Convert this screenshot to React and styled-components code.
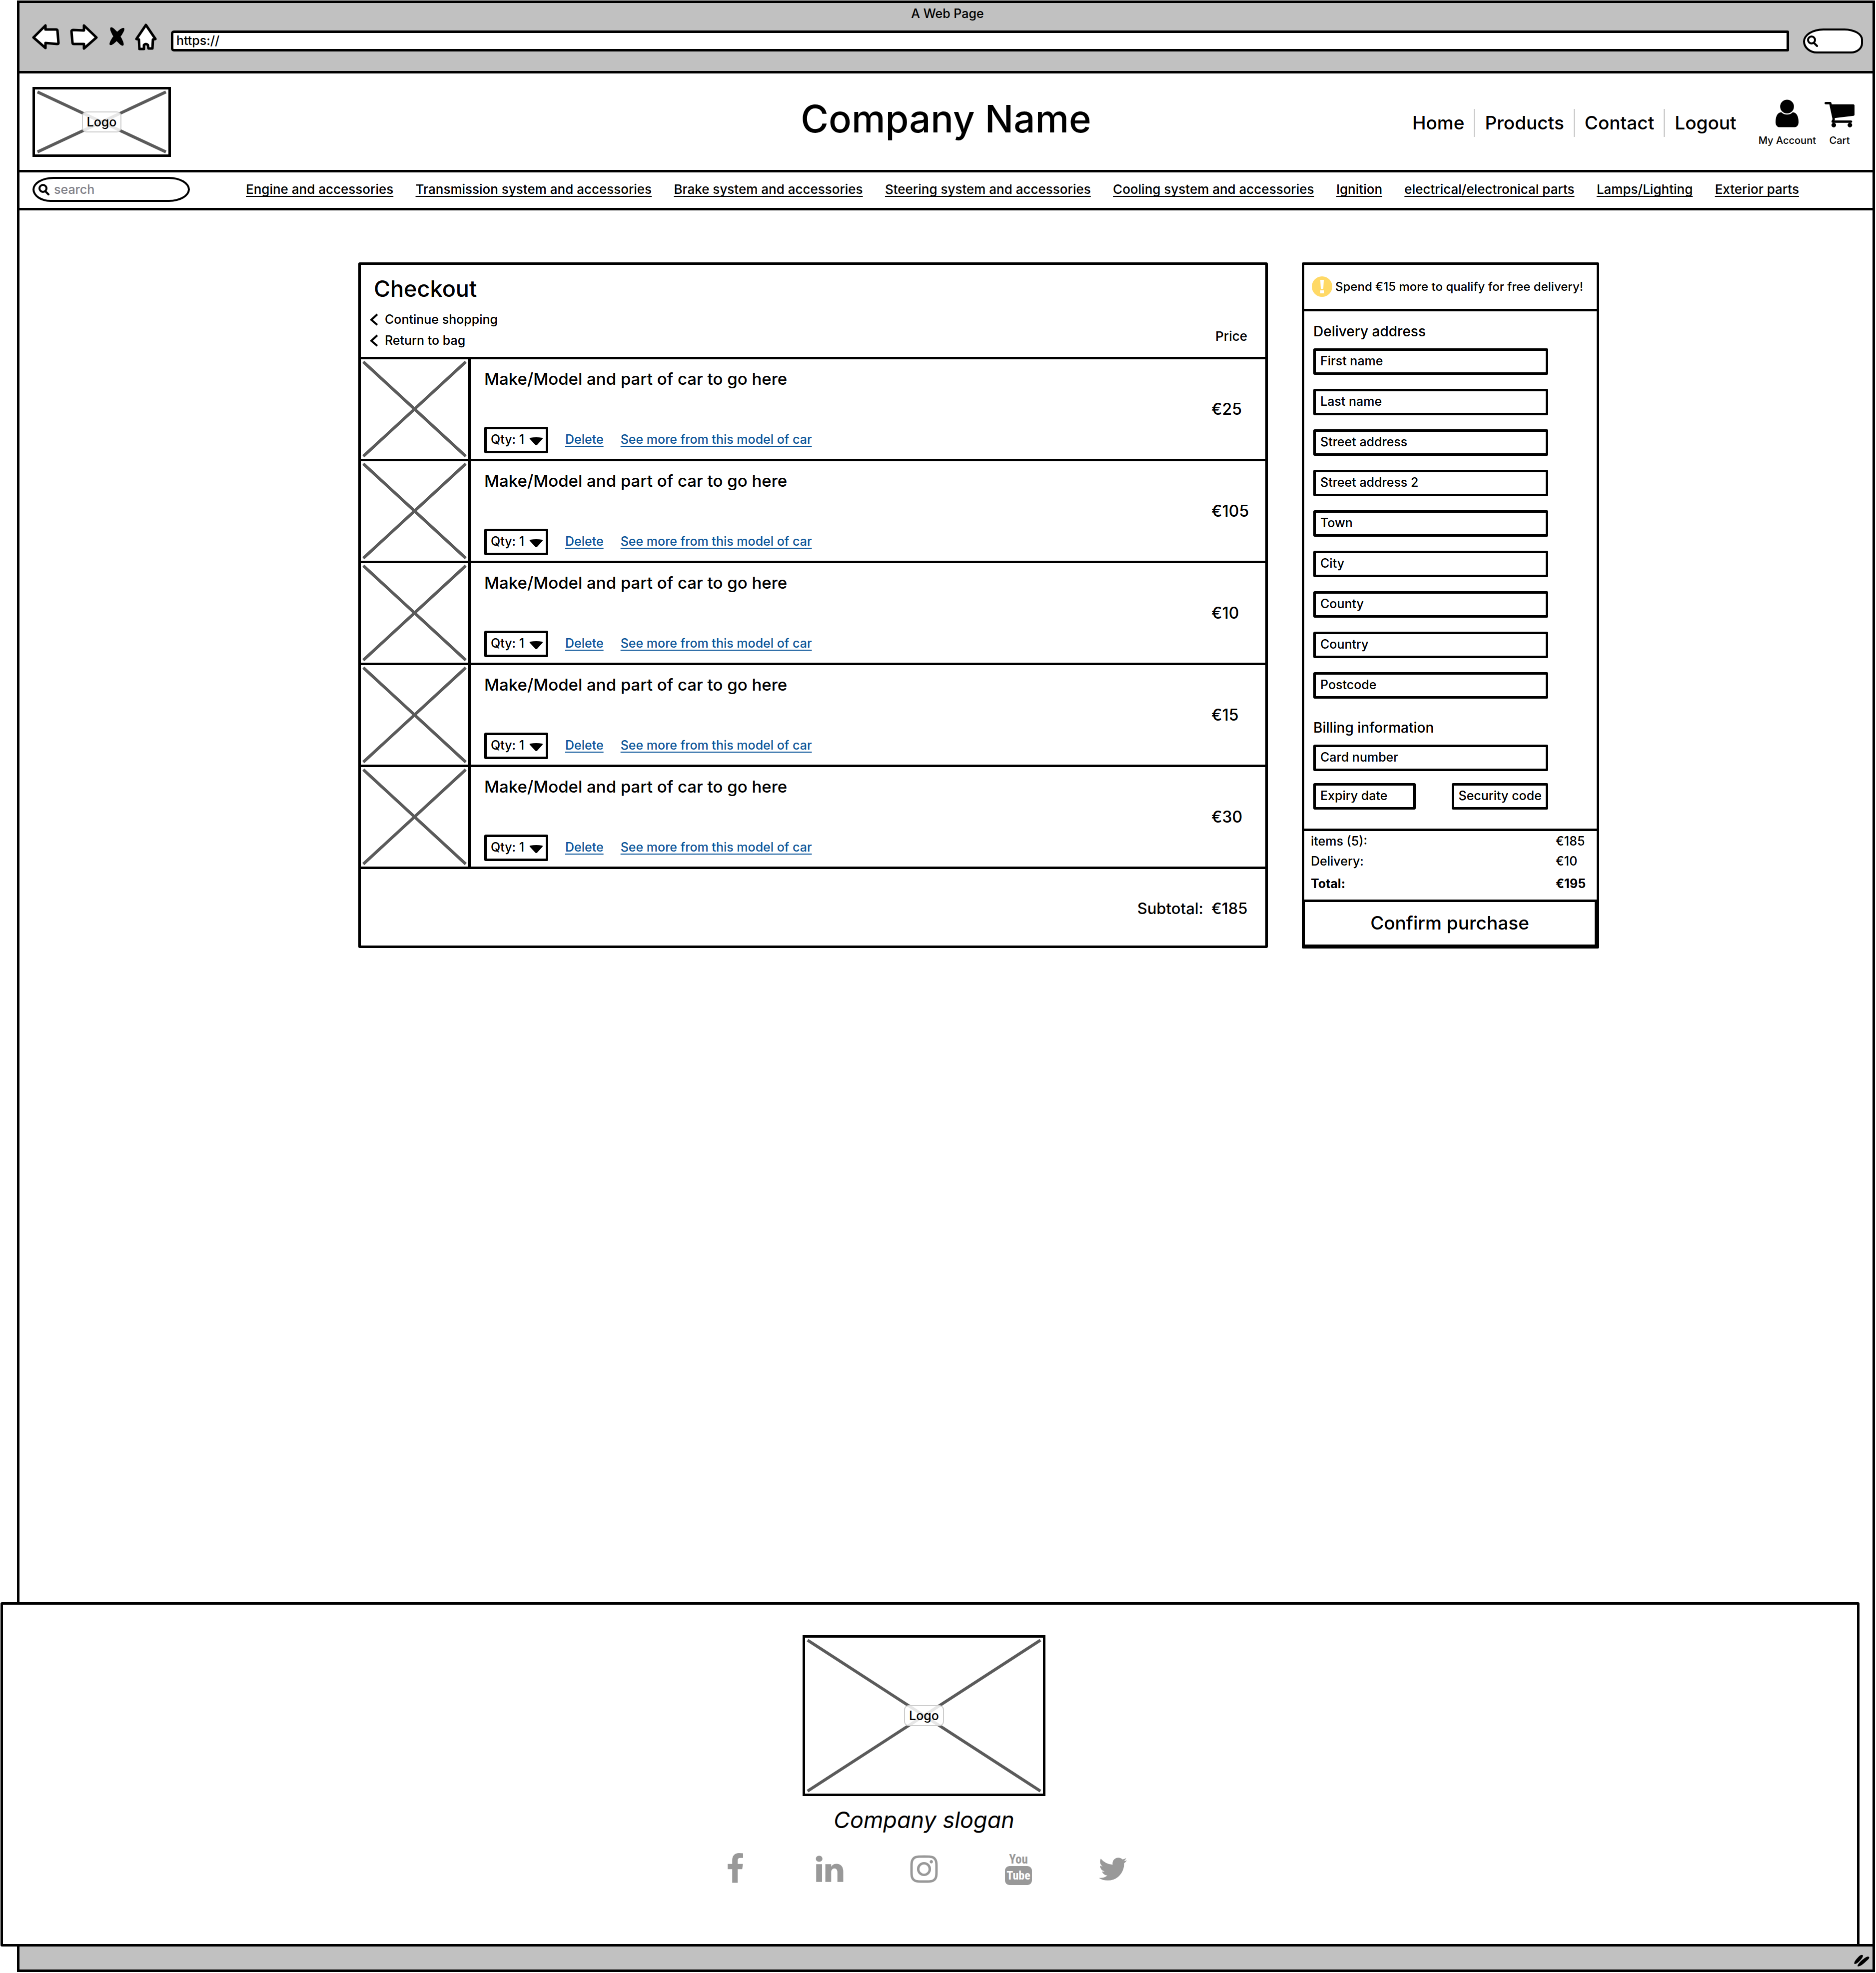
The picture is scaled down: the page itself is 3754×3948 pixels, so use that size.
import React from "react";
import styled, { createGlobalStyle, css } from "styled-components";

const ink = "#000";
const chrome = "#c1c1c1";
const cross = "#5b5b5b";
const linkBlue = "#0b5599";
const line = `5px solid ${ink}`;

const GlobalStyle = createGlobalStyle`
  *, *::before, *::after { box-sizing: border-box; }
  body {
    margin: 0;
    background: #fff;
    color: ${ink};
    font: 450 25px/40px Inter, "Liberation Sans", sans-serif;
  }
  h1, h2, h3, p, ul, dl, dd, fieldset { margin: 0; padding: 0; border: 0; }
  h1, h2, h3 { font-weight: 450; }
  ul { list-style: none; }
  a { color: inherit; text-decoration: none; }
  button, input, select { font: inherit; color: inherit; margin: 0; }
  svg { display: block; }
`;

const BrowserWindow = styled.div`
  display: flex;
  flex-direction: column;
  min-height: calc(100vh - 3px);
  margin: 1px 2px 2px 34px;
  border: ${line};
`;

/* ---------- browser chrome ---------- */

const Toolbar = styled.div`
  padding: 5px 19px 26px 25px;
  background: ${chrome};
  border-bottom: ${line};
`;

const WindowTitle = styled.p`
  line-height: 32px;
  text-align: center;
  margin-bottom: 5px;
`;

const Controls = styled.div`
  display: flex;
  align-items: center;
  gap: 28px;
  height: 68px;
`;

const ControlGroup = styled.div`
  display: flex;
  align-items: center;
  gap: 20px;
  padding-bottom: 16px;
`;

const IconButton = styled.button`
  padding: 0;
  border: 0;
  background: none;
`;

const Address = styled.input`
  flex: 1;
  min-width: 0;
  height: 42px;
  padding: 0 8px 3px 6px;
  border: ${line};
  border-radius: 6px 3px 3px 6px;
  background: #fff;
`;

const RoundField = styled.div`
  display: flex;
  align-items: center;
  gap: 8px;
  width: ${(p) => p.$width};
  height: 50px;
  padding: 0 ${(p) => p.$pad};
  border: 4px solid ${ink};
  border-radius: ${(p) => p.$radius};
  background: #fff;
`;

const BareInput = styled.input`
  flex: 1;
  min-width: 0;
  padding: 0;
  border: 0;
  outline: 0;
  background: none;
  &::placeholder { color: #808088; opacity: 1; }
`;

/* ---------- site header ---------- */

const Header = styled.header`
  display: grid;
  grid-template-columns: 1fr auto 1fr;
  align-items: center;
  padding: 27px 36px 26px 26px;
  border-bottom: ${line};
`;

const CompanyName = styled.h1`
  font-size: 76px;
  line-height: 80px;
  padding: 0 0 14px 10px;
`;

const HeaderRight = styled.div`
  display: flex;
  justify-content: flex-end;
  align-items: center;
  gap: 44px;
  padding-top: 4px;
`;

const MainNav = styled.nav`
  display: flex;
  font-size: 37px;
  line-height: 56px;
  a { padding: 0 19px; }
  a + a { border-left: 3px solid #ccc; }
  a:last-child { padding-right: 0; }
`;

const Shortcuts = styled.div`
  display: flex;
  align-items: flex-end;
  gap: 17px;
`;

const Shortcut = styled.a`
  display: flex;
  flex-direction: column;
  align-items: center;
  gap: 14px;
  font-size: 20px;
  line-height: 24px;
`;

const CategoryBar = styled.div`
  display: flex;
  align-items: center;
  gap: 112px;
  padding: 9px 147px 12px 26px;
  border-bottom: ${line};
`;

const Categories = styled.nav`
  flex: 1;
  display: flex;
  justify-content: space-between;
  font-size: 26px;
  a {
    text-decoration: underline;
    text-decoration-thickness: 2px;
    text-underline-offset: 4px;
    text-decoration-skip-ink: none;
  }
`;

/* ---------- picture placeholder ---------- */

const Placeholder = styled.div`
  display: grid;
  grid-template: minmax(0, 1fr) / minmax(0, 1fr);
  place-items: center;
  width: ${(p) => p.$width};
  height: ${(p) => p.$height};
  ${(p) => p.$framed && css`border: ${line};`}
  > * { grid-area: 1 / 1; }
  > svg { width: 100%; height: 100%; padding: 5px; overflow: visible; }
`;

const PlaceholderLabel = styled.span`
  position: relative;
  padding: 0 8px;
  line-height: 38px;
  border: 2px solid #ccc;
  border-radius: 9px;
  background: rgba(255, 255, 255, 0.85);
`;

/* ---------- checkout ---------- */

const Main = styled.main`
  flex: 1;
  display: grid;
  grid-template-columns: minmax(0, 1fr) 595px;
  align-items: start;
  gap: 68px;
  padding: 104px 547px 104px 678px;
`;

const Card = styled.section`
  border: ${line};
  border-radius: 3px;
`;

const CheckoutHead = styled.div`
  display: flex;
  justify-content: space-between;
  align-items: flex-end;
  padding: 20px 36px 12px 16px;
`;

const CheckoutTitle = styled.h2`
  font-size: 45px;
  line-height: 56px;
  padding-left: 10px;
  margin-bottom: 12px;
`;

const BackLink = styled.a`
  display: flex;
  align-items: center;
  gap: 13px;
  line-height: 42px;
`;

const PriceHeading = styled.span`
  font-size: 26px;
  padding-bottom: 9px;
`;

const Item = styled.li`
  display: grid;
  grid-template-columns: 220px minmax(0, 1fr) 108px;
  border-top: ${line};
`;

const ItemPicture = styled.div`
  border-right: ${line};
`;

const ItemBody = styled.div`
  display: flex;
  flex-direction: column;
  justify-content: space-between;
  padding: 19px 0 11px 27px;
`;

const ItemTitle = styled.h3`
  font-size: 33px;
`;

const ItemActions = styled.div`
  display: flex;
  align-items: center;
  gap: 34px;
`;

const QtyBox = styled.span`
  position: relative;
  svg { position: absolute; right: 10px; top: 21px; pointer-events: none; }
`;

const QtySelect = styled.select`
  appearance: none;
  display: block;
  width: 128px;
  height: 53px;
  padding: 0 0 3px 8px;
  border: ${line};
  border-radius: 3px;
  background: #fff;
`;

const TextLink = styled.a`
  padding-bottom: 3px;
  color: ${linkBlue};
  text-decoration: underline;
  text-decoration-thickness: 2px;
  text-underline-offset: 4px;
  text-decoration-skip-ink: none;
`;

const Price = styled.span`
  align-self: center;
  font-size: 32px;
`;

const Subtotal = styled.div`
  display: grid;
  grid-template-columns: 1fr 108px;
  gap: 16px;
  padding: 59px 0 54px;
  border-top: ${line};
  font-size: 31px;
  text-align: right;
  span:last-child { text-align: left; }
`;

/* ---------- delivery and payment ---------- */

const Notice = styled.p`
  display: flex;
  align-items: center;
  gap: 6px;
  padding: 23px 15px 24px;
  border-bottom: ${line};
  font-size: 24px;
  white-space: nowrap;
  svg { flex: none; }
`;

const Fields = styled.div`
  padding: 20px 97px 38px 18px;
`;

const Group = styled.fieldset`
  display: grid;
  gap: ${(p) => p.$gap};
  min-width: 0;
  & + & { margin-top: 38px; }
`;

const GroupTitle = styled.h3`
  font-size: 28px;
  margin-bottom: 14px;
`;

const Pair = styled.div`
  display: grid;
  grid-template-columns: 204fr 193fr;
  gap: 72px;
`;

const TextField = styled.input`
  width: 100%;
  height: 53px;
  padding: 0 0 3px 9px;
  border: ${line};
  border-radius: 3px;
  background: #fff;
  &::placeholder { color: ${ink}; opacity: 1; }
`;

const Totals = styled.dl`
  padding-bottom: 7px;
  border-top: ${line};
`;

const TotalRow = styled.div`
  display: grid;
  grid-template-columns: 1fr 82px;
  padding: ${(p) => (p.$strong ? "5px" : "0")} 0 ${(p) => (p.$strong ? "5px" : "0")} 13px;
  font-weight: ${(p) => (p.$strong ? 700 : 450)};
`;

const ConfirmButton = styled.button`
  display: block;
  width: 100%;
  padding: 22px 0 23px;
  border: solid ${ink};
  border-width: 5px 4px 3px 1px;
  background: #fff;
  font-size: 37px;
`;

/* ---------- footer ---------- */

const Footer = styled.footer`
  position: relative;
  display: flex;
  flex-direction: column;
  align-items: center;
  margin: 0 26px -5px -38px;
  padding: 61px 24px 118px 0;
  border: ${line};
  border-radius: 3px;
  background: #fff;
`;

const Slogan = styled.p`
  margin: 18px 0 36px;
  font-size: 45px;
  line-height: 60px;
  font-style: italic;
`;

const SocialLinks = styled.ul`
  display: flex;
  gap: 125px;
  height: 64px;
  color: #999;
`;

const YouTubeMark = styled.span`
  display: flex;
  flex-direction: column;
  align-items: center;
  width: 64px;
  font-family: "Liberation Sans Narrow", "Roboto Condensed", Roboto, sans-serif;
  font-weight: 700;
  font-size: 25px;
  line-height: 26px;
`;

const Tube = styled.span`
  width: 54px;
  border-radius: 9px;
  background: #999;
  color: #fff;
  text-align: center;
  font-size: 24px;
  line-height: 38px;
`;

const StatusBar = styled.div`
  display: flex;
  justify-content: flex-end;
  padding: 16px 5px 5px;
  background: ${chrome};
  border-top: ${line};
`;

/* ---------- drawings ---------- */

const Sketch = ({ w, h, children }) => (
  <svg width={w} height={h} viewBox={`0 0 ${w} ${h}`} fill="#fff" stroke={ink} strokeWidth="5" strokeLinejoin="round" aria-hidden="true">
    {children}
  </svg>
);

const MagnifierIcon = styled.svg`
  flex: none;
`;

const Magnifier = () => (
  <MagnifierIcon width="24" height="24" viewBox="0 0 24 24" fill="none" stroke={ink} strokeWidth="4" strokeLinecap="round" aria-hidden="true">
    <circle cx="10" cy="10" r="7" />
    <path d="M16 17l5 5" />
  </MagnifierIcon>
);

const Chevron = () => (
  <svg width="19" height="26" viewBox="0 0 19 26" fill="none" stroke={ink} strokeWidth="4" aria-hidden="true">
    <path d="M17 3L5 14l12 10" />
  </svg>
);

const Cross = () => (
  <svg viewBox="0 0 100 100" preserveAspectRatio="none" stroke={cross} strokeWidth="6" aria-hidden="true">
    <path d="M0 0L100 100M100 0L0 100" vectorEffect="non-scaling-stroke" />
  </svg>
);

const Glyph = ({ d, size = 64 }) => (
  <svg width={size} height={size} viewBox="0 0 1792 1792" fill="currentColor" aria-hidden="true">
    <path d={d} />
  </svg>
);

const userPath =
  "M1536 1399q0 109-62.5 187t-150.5 78h-854q-88 0-150.5-78t-62.5-187q0-85 8.5-160.5t31.5-152 58.5-131 94-89 134.5-34.5q131 128 313 128t313-128q76 0 134.5 34.5t94 89 58.5 131 31.5 152 8.5 160.5zm-256-887q0 159-112.5 271.5t-271.5 112.5-271.5-112.5-112.5-271.5 112.5-271.5 271.5-112.5 271.5 112.5 112.5 271.5z";
const cartPath =
  "M640 1536q0 52-38 90t-90 38-90-38-38-90 38-90 90-38 90 38 38 90zm896 0q0 52-38 90t-90 38-90-38-38-90 38-90 90-38 90 38 38 90zm128-1088v512q0 24-16.5 42.5t-40.5 21.5l-1044 122q13 60 13 70 0 16-24 64h920q26 0 45 19t19 45-19 45-45 19h-1024q-26 0-45-19t-19-45q0-11 8-31.5t16-36 21.5-40 15.5-29.5l-177-823h-204q-26 0-45-19t-19-45 19-45 45-19h256q16 0 28.5 6.5t19.5 15.5 13 24.5 8 26 5.5 29.5 4.5 26h1201q26 0 45 19t19 45z";
const facebookPath =
  "M1343 12v264h-157q-86 0-116 36t-30 108v189h293l-39 296h-254v759h-306v-759h-255v-296h255v-218q0-186 104-288.5t277-102.5q147 0 228 12z";
const linkedinPath =
  "M477 625v991h-330v-991h330zm21-306q1 73-50.5 122t-135.5 49h-2q-82 0-132-49t-50-122q0-74 51.5-122.5t134.5-48.5 133 48.5 51 122.5zm1166 729v568h-329v-530q0-105-40.5-164.5t-126.5-59.5q-63 0-105.5 34.5t-63.5 85.5q-11 30-11 81v553h-329q2-399 2-647t-1-296l-1-48h329v144h-2q20-32 41-56t56.5-52 87-43.5 114.5-15.5q171 0 275 113.5t104 332.5z";
const instagramPath =
  "M1152 896q0-106-75-181t-181-75-181 75-75 181 75 181 181 75 181-75 75-181zm138 0q0 164-115 279t-279 115-279-115-115-279 115-279 279-115 279 115 115 279zm108-410q0 38-27 65t-65 27-65-27-27-65 27-65 65-27 65 27 27 65zm-502-220q-7 0-76.5-.5t-105.5 0-96.5 3-103 10-71.5 18.5q-50 20-88 58t-58 88q-11 29-18.5 71.5t-10 103-3 96.5 0 105.5.5 76.5-.5 76.5 0 105.5 3 96.5 10 103 18.5 71.5q20 50 58 88t88 58q29 11 71.5 18.5t103 10 96.5 3 105.5 0 76.5-.5 76.5.5 105.5 0 96.5-3 103-10 71.5-18.5q50-20 88-58t58-88q11-29 18.5-71.5t10-103 3-96.5 0-105.5-.5-76.5.5-76.5 0-105.5-3-96.5-10-103-18.5-71.5q-20-50-58-88t-88-58q-29-11-71.5-18.5t-103-10-96.5-3-105.5 0-76.5.5zm768 630q0 229-5 317-10 208-124 322t-322 124q-88 5-317 5t-317-5q-208-10-322-124t-124-322q-5-88-5-317t5-317q10-208 124-322t322-124q88-5 317-5t317 5q208 10 322 124t124 322q5 88 5 317z";
const twitterPath =
  "M1684 408q-67 98-162 167 1 14 1 42 0 130-38 259.5t-115.5 248.5-184.5 210.5-258 146-323 54.5q-271 0-496-145 35 4 78 4 225 0 401-138-105-2-188-64.5t-114-159.5q33 5 61 5 43 0 85-11-112-23-185.5-111.5t-73.5-205.5v-4q68 38 146 41-66-44-105-115t-39-154q0-88 44-163 121 149 294.5 238.5t371.5 99.5q-8-38-8-74 0-134 94.5-228.5t228.5-94.5q140 0 236 102 109-21 205-78-37 115-142 178 93-10 186-50z";

/* ---------- data ---------- */

const categories = [
  "Engine and accessories",
  "Transmission system and accessories",
  "Brake system and accessories",
  "Steering system and accessories",
  "Cooling system and accessories",
  "Ignition",
  "electrical/electronical parts",
  "Lamps/Lighting",
  "Exterior parts",
];
const prices = ["€25", "€105", "€10", "€15", "€30"];
const addressFields = [
  "First name",
  "Last name",
  "Street address",
  "Street address 2",
  "Town",
  "City",
  "County",
  "Country",
  "Postcode",
];

const Field = ({ label }) => <TextField aria-label={label} type="text" placeholder={label} />;

const Logo = ({ width, height }) => (
  <Placeholder $width={width} $height={height} $framed>
    <Cross />
    <PlaceholderLabel>Logo</PlaceholderLabel>
  </Placeholder>
);

export default function App() {
  return (
    <>
      <GlobalStyle />
      <BrowserWindow>
        <Toolbar>
          <WindowTitle>A Web Page</WindowTitle>
          <Controls>
            <ControlGroup>
              <IconButton aria-label="Back">
                <Sketch w={56} h={52}>
                  <path d="M3 27L27 3V11L48 11Q51 11 51 14L53 38Q53 40 50 40L27 38V48Z" />
                </Sketch>
              </IconButton>
              <IconButton aria-label="Forward">
                <Sketch w={56} h={52}>
                  <path d="M3 15Q3 12 7 12L28 13V3L53 27L28 49V40L8 40Q5 40 5 37Z" />
                </Sketch>
              </IconButton>
              <IconButton aria-label="Stop">
                <svg width="34" height="42" viewBox="0 0 34 42" aria-hidden="true">
                  <ellipse cx="18" cy="20" rx="22" ry="6" transform="rotate(55 18 20)" />
                  <ellipse cx="18" cy="20" rx="22" ry="6" transform="rotate(-50 18 20)" />
                </svg>
              </IconButton>
              <IconButton aria-label="Home">
                <Sketch w={44} h={54}>
                  <path d="M22 3L41 31L36 32L35 50H27L26 43Q22 39 18 43V51H9L8 32L3 31Z" />
                </Sketch>
              </IconButton>
            </ControlGroup>
            <Address aria-label="Address" type="text" defaultValue="https://" />
            <RoundField $width="120px" $pad="3px" $radius="44px 40px 26px 30px / 28px 24px 22px 26px">
              <Magnifier />
              <BareInput aria-label="Search the web" type="text" />
            </RoundField>
          </Controls>
        </Toolbar>

        <Header>
          <Logo width="277px" height="140px" />
          <CompanyName>Company Name</CompanyName>
          <HeaderRight>
            <MainNav>
              {["Home", "Products", "Contact", "Logout"].map((name) => (
                <a href="#" key={name}>{name}</a>
              ))}
            </MainNav>
            <Shortcuts>
              <Shortcut href="#">
                <svg width="46" height="56" viewBox="256 128 1280 1536" aria-hidden="true">
                  <path d={userPath} />
                </svg>
                My Account
              </Shortcut>
              <Shortcut href="#">
                <svg width="60" height="51" viewBox="0 256 1664 1408" aria-hidden="true">
                  <path d={cartPath} />
                </svg>
                Cart
              </Shortcut>
            </Shortcuts>
          </HeaderRight>
        </Header>

        <CategoryBar>
          <RoundField $width="315px" $pad="7px" $radius="42px 42px 42px 36px / 25px">
            <Magnifier />
            <BareInput aria-label="search" type="search" placeholder="search" />
          </RoundField>
          <Categories>
            {categories.map((name) => (
              <a href="#" key={name}>{name}</a>
            ))}
          </Categories>
        </CategoryBar>

        <Main>
          <Card>
            <CheckoutHead>
              <div>
                <CheckoutTitle>Checkout</CheckoutTitle>
                <BackLink href="#"><Chevron />Continue shopping</BackLink>
                <BackLink href="#"><Chevron />Return to bag</BackLink>
              </div>
              <PriceHeading>Price</PriceHeading>
            </CheckoutHead>
            <ul>
              {prices.map((price) => (
                <Item key={price}>
                  <ItemPicture>
                    <Placeholder $width="100%" $height="199px">
                      <Cross />
                    </Placeholder>
                  </ItemPicture>
                  <ItemBody>
                    <ItemTitle>Make/Model and part of car to go here</ItemTitle>
                    <ItemActions>
                      <QtyBox>
                        <QtySelect aria-label="Quantity">
                          <option>Qty: 1</option>
                        </QtySelect>
                        <svg width="28" height="16" viewBox="0 0 28 16" aria-hidden="true">
                          <path d="M2 1Q14-1 26 1Q28 2 26 4L16 15Q14 17 12 15L1 3Q0 1 2 1Z" />
                        </svg>
                      </QtyBox>
                      <TextLink href="#">Delete</TextLink>
                      <TextLink href="#">See more from this model of car</TextLink>
                    </ItemActions>
                  </ItemBody>
                  <Price>{price}</Price>
                </Item>
              ))}
            </ul>
            <Subtotal>
              <span>Subtotal:</span>
              <span>€185</span>
            </Subtotal>
          </Card>

          <Card as="form">
            <Notice>
              <svg width="41" height="41" viewBox="0 0 41 41" aria-hidden="true">
                <circle cx="20.5" cy="20.5" r="20.5" fill="#ffd966" />
                <path d="M17 7h7l-1 18h-5zM17 28h7v6h-7z" fill="#fff" />
              </svg>
              Spend €15 more to qualify for free delivery!
            </Notice>
            <Fields>
              <Group $gap="28px">
                <div>
                  <GroupTitle>Delivery address</GroupTitle>
                  <Field label={addressFields[0]} />
                </div>
                {addressFields.slice(1).map((label) => (
                  <Field label={label} key={label} />
                ))}
              </Group>
              <Group $gap="24px">
                <div>
                  <GroupTitle>Billing information</GroupTitle>
                  <Field label="Card number" />
                </div>
                <Pair>
                  <Field label="Expiry date" />
                  <Field label="Security code" />
                </Pair>
              </Group>
            </Fields>
            <Totals>
              <TotalRow><dt>items (5):</dt><dd>€185</dd></TotalRow>
              <TotalRow><dt>Delivery:</dt><dd>€10</dd></TotalRow>
              <TotalRow $strong><dt>Total:</dt><dd>€195</dd></TotalRow>
            </Totals>
            <ConfirmButton type="button">Confirm purchase</ConfirmButton>
          </Card>
        </Main>

        <Footer>
          <Logo width="486px" height="322px" />
          <Slogan>Company slogan</Slogan>
          <SocialLinks>
            <li><a href="#" aria-label="Facebook"><Glyph d={facebookPath} /></a></li>
            <li><a href="#" aria-label="LinkedIn"><Glyph d={linkedinPath} /></a></li>
            <li><a href="#" aria-label="Instagram"><Glyph d={instagramPath} /></a></li>
            <li><a href="#"><YouTubeMark>You<Tube>Tube</Tube></YouTubeMark></a></li>
            <li><a href="#" aria-label="Twitter"><Glyph d={twitterPath} /></a></li>
          </SocialLinks>
        </Footer>

        <StatusBar>
          <svg width="32" height="25" viewBox="0 0 32 25" aria-hidden="true">
            <path d="M1 19Q-1 16 5 9Q13-1 17 1Q20 3 13 11Q5 20 1 19ZM8 24Q5 23 12 15Q22 5 28 4Q34 5 26 12Q14 24 8 24Z" />
          </svg>
        </StatusBar>
      </BrowserWindow>
    </>
  );
}
